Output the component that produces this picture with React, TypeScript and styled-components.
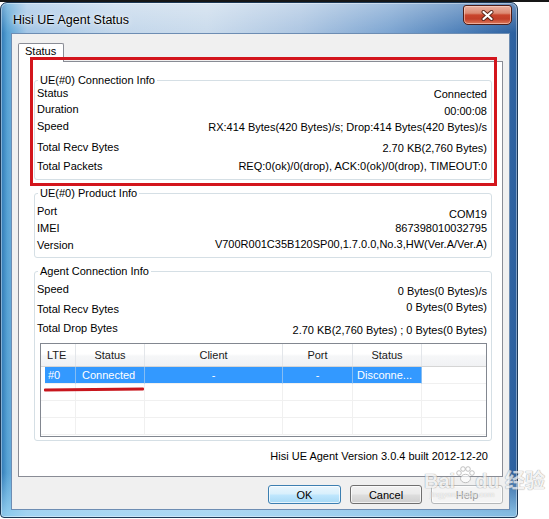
import React from "react";
import styled, { createGlobalStyle } from "styled-components";

type InfoRowData = {
  label: string;
  value: string;
  h: number;
  dy?: number;
};

const connectionRows: InfoRowData[] = [
  { label: "Status", value: "Connected", h: 16, dy: 1 },
  { label: "Duration", value: "00:00:08", h: 17, dy: 2 },
  { label: "Speed", value: "RX:414 Bytes(420 Bytes)/s; Drop:414 Bytes(420 Bytes)/s", h: 21, dy: 1 },
  { label: "Total Recv Bytes", value: "2.70 KB(2,760 Bytes)", h: 19, dy: 1 },
  { label: "Total Packets", value: "REQ:0(ok)/0(drop), ACK:0(ok)/0(drop), TIMEOUT:0", h: 14, dy: 0 },
];

const productRows: InfoRowData[] = [
  { label: "Port", value: "COM19", h: 17, dy: 3 },
  { label: "IMEI", value: "867398010032795", h: 17, dy: 0 },
  { label: "Version", value: "V700R001C35B120SP00,1.7.0.0,No.3,HW(Ver.A/Ver.A)", h: 14, dy: -1 },
];

const agentRows: InfoRowData[] = [
  { label: "Speed", value: "0 Bytes(0 Bytes)/s", h: 20, dy: 2 },
  { label: "Total Recv Bytes", value: "0 Bytes(0 Bytes)", h: 19, dy: -2 },
  { label: "Total Drop Bytes", value: "2.70 KB(2,760 Bytes) ; 0 Bytes(0 Bytes)", h: 22, dy: 2 },
];

type Align = "left" | "center";
type Column = { title: string; align: Align; pad: number };

const columns: Column[] = [
  { title: "LTE", align: "left", pad: 6 },
  { title: "Status", align: "center", pad: 0 },
  { title: "Client", align: "center", pad: 0 },
  { title: "Port", align: "center", pad: 0 },
  { title: "Status", align: "center", pad: 0 },
];

// how the item text sits in each column (differs from the header)
const cellLayout: { align: Align; pad: number }[] = [
  { align: "left", pad: 3 },
  { align: "left", pad: 6 },
  { align: "center", pad: 0 },
  { align: "center", pad: 0 },
  { align: "left", pad: 4 },
];

const listRows: { cells: string[]; selected: boolean }[] = [
  { cells: ["#0", "Connected", "-", "-", "Disconne..."], selected: true },
  { cells: ["", "", "", "", ""], selected: false },
  { cells: ["", "", "", "", ""], selected: false },
  { cells: ["", "", "", "", ""], selected: false },
];

function InfoRows({ rows }: { rows: InfoRowData[] }) {
  return (
    <>
      {rows.map((r) => (
        <InfoRow key={r.label} $h={r.h}>
          <Label>{r.label}</Label>
          <Value $dy={r.dy ?? 0}>{r.value}</Value>
        </InfoRow>
      ))}
    </>
  );
}

export default function App() {
  return (
    <Page>
      <GlobalStyle />
      <ScreenEdge />
      <Window>
        <TitleBar>
          <Title>Hisi UE Agent Status</Title>
          <CloseButton aria-label="Close">
            <svg width="13" height="11" viewBox="0 0 13 11">
              <path d="M2.5 2 L10.5 9 M10.5 2 L2.5 9" stroke="#5a2418" strokeWidth="4" strokeLinecap="round" />
              <path d="M2.5 2 L10.5 9 M10.5 2 L2.5 9" stroke="#ffffff" strokeWidth="2.2" strokeLinecap="round" />
            </svg>
          </CloseButton>
        </TitleBar>
        <Client>
          <TabStrip>
            <Tab>Status</Tab>
          </TabStrip>
          <TabPanel>
            <HighlightBox />
            <GroupBox $mt={0} $pt={0} $pb={6}>
              <Legend>UE(#0) Connection Info</Legend>
              <InfoRows rows={connectionRows} />
            </GroupBox>
            <GroupBox $mt={7} $pt={5} $pb={5}>
              <Legend>UE(#0) Product Info</Legend>
              <InfoRows rows={productRows} />
            </GroupBox>
            <GroupBox $mt={7} $pt={5} $pb={3}>
              <Legend>Agent Connection Info</Legend>
              <InfoRows rows={agentRows} />
              <ListView>
                <ListHeader>
                  {columns.map((c, i) => (
                    <HeaderCell key={i} $align={c.align} $pad={c.pad}>
                      {c.title}
                    </HeaderCell>
                  ))}
                  <HeaderFiller />
                </ListHeader>
                {listRows.map((row, ri) => (
                  <ListRow key={ri}>
                    {row.cells.map((text, ci) => (
                      <ListCell
                        key={ci}
                        $selected={row.selected}
                        $align={cellLayout[ci].align}
                        $pad={cellLayout[ci].pad}
                        $inset={ci === 0 && row.selected ? 4 : 0}
                      >
                        {text}
                      </ListCell>
                    ))}
                    <ListFiller />
                  </ListRow>
                ))}
                <Underline />
              </ListView>
            </GroupBox>
            <VersionText>Hisi UE Agent Version 3.0.4 built 2012-12-20</VersionText>
          </TabPanel>
          <ButtonRow>
            <DialogButton $w={73} $variant="default">OK</DialogButton>
            <DialogButton $w={72} $variant="normal">Cancel</DialogButton>
            <DialogButton $w={72} $variant="disabled" disabled>
              Help
            </DialogButton>
          </ButtonRow>
        </Client>
      </Window>
      <Watermark>
        <WatermarkMain>
          Bai
          <Paw viewBox="0 0 20 18" width="20" height="18">
            <circle cx="4" cy="7" r="2.3" />
            <circle cx="8" cy="3" r="2.3" />
            <circle cx="13" cy="3" r="2.3" />
            <circle cx="17" cy="7" r="2.3" />
            <ellipse cx="10.5" cy="12.5" rx="5" ry="4.2" />
          </Paw>
          du 经验
        </WatermarkMain>
        <WatermarkSub>jingyan.baidu.com</WatermarkSub>
      </Watermark>
    </Page>
  );
}

const GlobalStyle = createGlobalStyle`
  html, body {
    margin: 0;
    padding: 0;
    background: #ffffff;
  }
  body {
    font-family: "Liberation Sans", Arial, sans-serif;
    font-size: 11px;
    color: #000000;
  }
  *, *::before, *::after {
    box-sizing: border-box;
  }
`;

const Page = styled.div`
  position: relative;
  width: 549px;
  height: 519px;
  overflow: hidden;
  background: #ffffff;
`;

const ScreenEdge = styled.div`
  height: 2px;
  background: #161616;
`;

const Window = styled.div`
  width: 518px;
  height: 516px;
  display: flex;
  flex-direction: column;
  padding: 0 7px 7px 10px;
  border: 1px solid #1c3856;
  border-radius: 7px 7px 4px 4px;
  background:
    linear-gradient(180deg, rgba(255, 255, 255, 0.3) 0px, rgba(255, 255, 255, 0) 30px,
      rgba(255, 255, 255, 0) 470px, rgba(160, 215, 245, 0.75) 510px),
    linear-gradient(90deg, #2f78b4 0%, #56a2d4 1.2%, #a4c6e6 5%, #c3d7eb 22%, #cadbec 40%,
      #adc6e2 58%, #7ea6d2 75%, #4a7db7 90%, #2b5f9e 100%);
  box-shadow: inset 0 0 0 1px rgba(255, 255, 255, 0.4);
`;

const TitleBar = styled.div`
  height: 30px;
  display: flex;
  justify-content: space-between;
  align-items: flex-start;
`;

const Title = styled.div`
  padding: 10px 0 0 2px;
  font-size: 12.5px;
  line-height: 14px;
  color: #000000;
  text-shadow: 0 0 6px rgba(255, 255, 255, 0.95), 0 0 2px rgba(255, 255, 255, 0.8);
`;

const CloseButton = styled.button`
  width: 49px;
  height: 20px;
  margin: 2px -2px 0 0;
  padding: 0;
  display: flex;
  align-items: center;
  justify-content: center;
  border: 1px solid #4e1d16;
  border-radius: 3px 3px 5px 5px;
  background: linear-gradient(180deg, #eab0a0 0%, #dc8a72 40%, #c9452c 50%, #c23f28 72%, #dc7a5c 100%);
  box-shadow: inset 0 0 0 1px rgba(255, 220, 210, 0.55);
`;

const Client = styled.div`
  height: 477px;
  background: #f0f0f0;
  border: 1px solid #6d8db3;
  padding: 9px 6px 0 6px;
`;

const TabStrip = styled.div`
  height: 18px;
  display: flex;
  align-items: flex-start;
`;

const Tab = styled.div`
  position: relative;
  z-index: 1;
  width: 46px;
  height: 19px;
  padding: 0 0 0 6px;
  background: #ffffff;
  border: 1px solid #898c95;
  border-bottom: none;
  border-radius: 2px 2px 0 0;
  line-height: 15px;
`;

const TabPanel = styled.div`
  position: relative;
  height: 416px;
  background: #ffffff;
  border: 1px solid #898c95;
  padding: 12px 10px 0 15px;
`;

/* red annotation drawn over the first group in the screenshot */
const HighlightBox = styled.div`
  position: absolute;
  z-index: 3;
  left: 11px;
  top: -5px;
  width: 467px;
  height: 129px;
  border: 3px solid #d3151c;
  pointer-events: none;
`;

const GroupBox = styled.fieldset<{ $mt: number; $pt: number; $pb: number }>`
  min-width: 0;
  margin: ${(p) => p.$mt}px 0 0 0;
  padding: ${(p) => p.$pt}px 4px ${(p) => p.$pb}px 2px;
  border: 1px solid #d5dfe5;
  border-radius: 3px;
`;

const Legend = styled.legend`
  margin-left: 1px;
  padding: 0 2px;
  line-height: 12px;
  color: #000000;
`;

const InfoRow = styled.div<{ $h: number }>`
  display: flex;
  justify-content: space-between;
  align-items: flex-start;
  height: ${(p) => p.$h}px;
  line-height: 14px;
  white-space: nowrap;
`;

const Label = styled.span`
  color: #000000;
`;

const Value = styled.span<{ $dy: number }>`
  margin-top: ${(p) => p.$dy}px;
  color: #000000;
`;

const ListView = styled.div`
  position: relative;
  width: 447px;
  height: 94px;
  margin-left: 3px;
  border: 1px solid #828790;
  background: #ffffff;
  overflow: hidden;
`;

const ListHeader = styled.div`
  display: grid;
  grid-template-columns: 35px 69px 138px 70px 69px 1fr;
  height: 23px;
  background: linear-gradient(180deg, #ffffff 0%, #ffffff 45%, #f6f7f8 55%, #f1f2f4 100%);
  border-bottom: 1px solid #d5d5d5;
`;

const HeaderCell = styled.div<{ $align: Align; $pad: number }>`
  border-right: 1px solid #e3e6ea;
  padding-left: ${(p) => p.$pad}px;
  text-align: ${(p) => p.$align};
  line-height: 22px;
  color: #1a1a1a;
`;

const HeaderFiller = styled.div``;

const ListRow = styled.div`
  display: grid;
  grid-template-columns: 35px 69px 138px 70px 69px 1fr;
  height: 17px;
`;

const ListCell = styled.div<{ $selected: boolean; $align: Align; $pad: number; $inset: number }>`
  margin-left: ${(p) => p.$inset}px;
  padding-left: ${(p) => p.$pad}px;
  text-align: ${(p) => p.$align};
  line-height: 16px;
  white-space: nowrap;
  overflow: hidden;
  color: ${(p) => (p.$selected ? "#ffffff" : "#000000")};
  background: ${(p) => (p.$selected ? "#3399ff" : "#ffffff")};
  border-right: 1px solid ${(p) => (p.$selected ? "#86bdf3" : "#f0f0f0")};
  border-bottom: 1px solid #f0f0f0;
`;

const ListFiller = styled.div`
  border-bottom: 1px solid #f0f0f0;
`;

/* hand-drawn red underline below the selected row */
const Underline = styled.div`
  position: absolute;
  left: 3px;
  top: 44px;
  width: 100px;
  height: 3px;
  background: #c8161d;
  border-radius: 1px;
  transform: rotate(-0.6deg);
`;

const VersionText = styled.div`
  margin-top: 8px;
  padding-right: 4px;
  text-align: right;
  line-height: 14px;
  color: #000000;
`;

const ButtonRow = styled.div`
  display: flex;
  justify-content: flex-end;
  gap: 9px;
  margin-top: 8px;
`;

const DialogButton = styled.button<{ $w: number; $variant: "default" | "normal" | "disabled" }>`
  width: ${(p) => p.$w}px;
  height: 19px;
  padding: 0;
  font-family: "Liberation Sans", Arial, sans-serif;
  font-size: 11px;
  border-radius: 3px;
  color: ${(p) => (p.$variant === "disabled" ? "#9a9a9a" : "#000000")};
  border: 1px solid
    ${(p) => (p.$variant === "default" ? "#3c7fb1" : p.$variant === "disabled" ? "#b5b8ba" : "#707070")};
  background: ${(p) =>
    p.$variant === "default"
      ? "linear-gradient(180deg, #eaf6fd 0%, #d9f0fc 45%, #bee6fd 55%, #a7d9f5 100%)"
      : p.$variant === "disabled"
      ? "#f4f4f4"
      : "linear-gradient(180deg, #f2f2f2 0%, #ebebeb 45%, #dddddd 55%, #cfcfcf 100%)"};
  box-shadow: inset 0 0 0 1px rgba(255, 255, 255, 0.7);
`;

const Watermark = styled.div`
  position: absolute;
  left: 424px;
  top: 466px;
  pointer-events: none;
  opacity: 0.75;
`;

const WatermarkMain = styled.div`
  display: flex;
  align-items: flex-end;
  font-family: "Liberation Sans", "Noto Sans CJK SC", sans-serif;
  font-size: 20px;
  font-weight: bold;
  line-height: 22px;
  color: rgba(255, 255, 255, 0.9);
  text-shadow: 0 0 1px #8c8c8c, 0 0 1px #8c8c8c;
  white-space: nowrap;
`;

const Paw = styled.svg`
  margin: 0 0 8px 0;
  fill: rgba(255, 255, 255, 0.9);
  stroke: #9a9a9a;
  stroke-width: 0.8;
`;

const WatermarkSub = styled.div`
  margin-top: -2px;
  padding-left: 6px;
  font-family: "Liberation Sans", sans-serif;
  font-size: 8px;
  color: rgba(255, 255, 255, 0.9);
  text-shadow: 0 0 1px #9a9a9a;
`;
